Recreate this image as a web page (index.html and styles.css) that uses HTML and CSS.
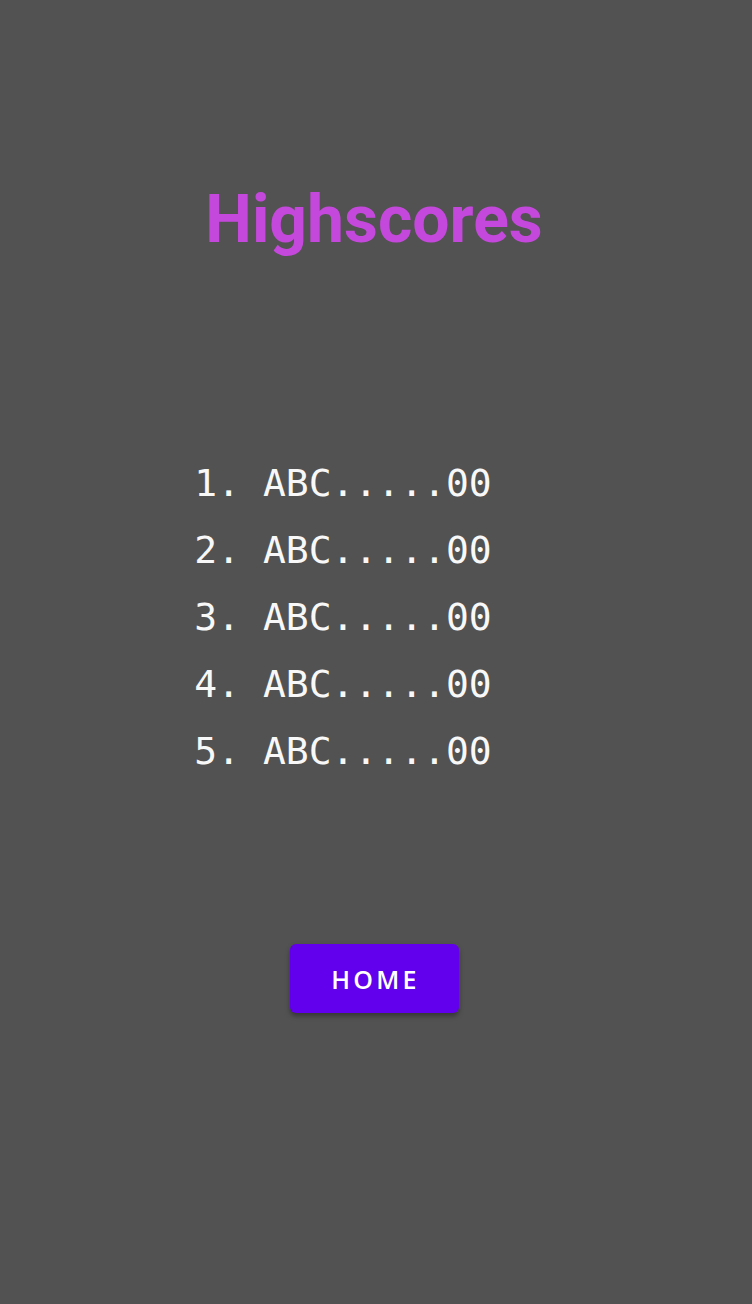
FILE: index.html
```html
<!DOCTYPE html>
<html>
<head>
<meta charset="utf-8">
<link rel="stylesheet" href="styles.css">
</head>
<body>
<main class="screen">
  <h1 class="title">Highscores</h1>
  <ol class="scores">
    <li>1. ABC.....00</li>
    <li>2. ABC.....00</li>
    <li>3. ABC.....00</li>
    <li>4. ABC.....00</li>
    <li>5. ABC.....00</li>
  </ol>
  <button class="home">HOME</button>
</main>
</body>
</html>
```
FILE: styles.css
```css
html, body {
  margin: 0;
  padding: 0;
  background: #525252;
}
.screen {
  width: 748px;
  height: 1304px;
  display: flex;
  flex-direction: column;
  align-items: center;
}
.title {
  margin: 178px 0 0 0;
  font-family: Roboto, "Liberation Sans", sans-serif;
  font-weight: 700;
  font-size: 66px;
  line-height: 84px;
  color: #c548dc;
}
.scores {
  list-style: none;
  margin: 188px 0 0 0;
  padding: 0;
  font-family: "DejaVu Sans Mono", "Liberation Mono", monospace;
  font-size: 38px;
  line-height: 67px;
  color: #f8f8f8;
  transform: translateX(-31px);
}
.home {
  margin-top: 159px;
  width: 169px;
  height: 69px;
  padding: 0 0 0 3px;
  border: none;
  border-radius: 6px;
  background: #6200ee;
  color: #ffffff;
  font-family: "Open Sans", "Noto Sans", sans-serif;
  font-weight: 600;
  font-size: 25px;
  letter-spacing: 3.2px;
  box-shadow: 0 3px 5px rgba(0,0,0,0.35);
}
```
